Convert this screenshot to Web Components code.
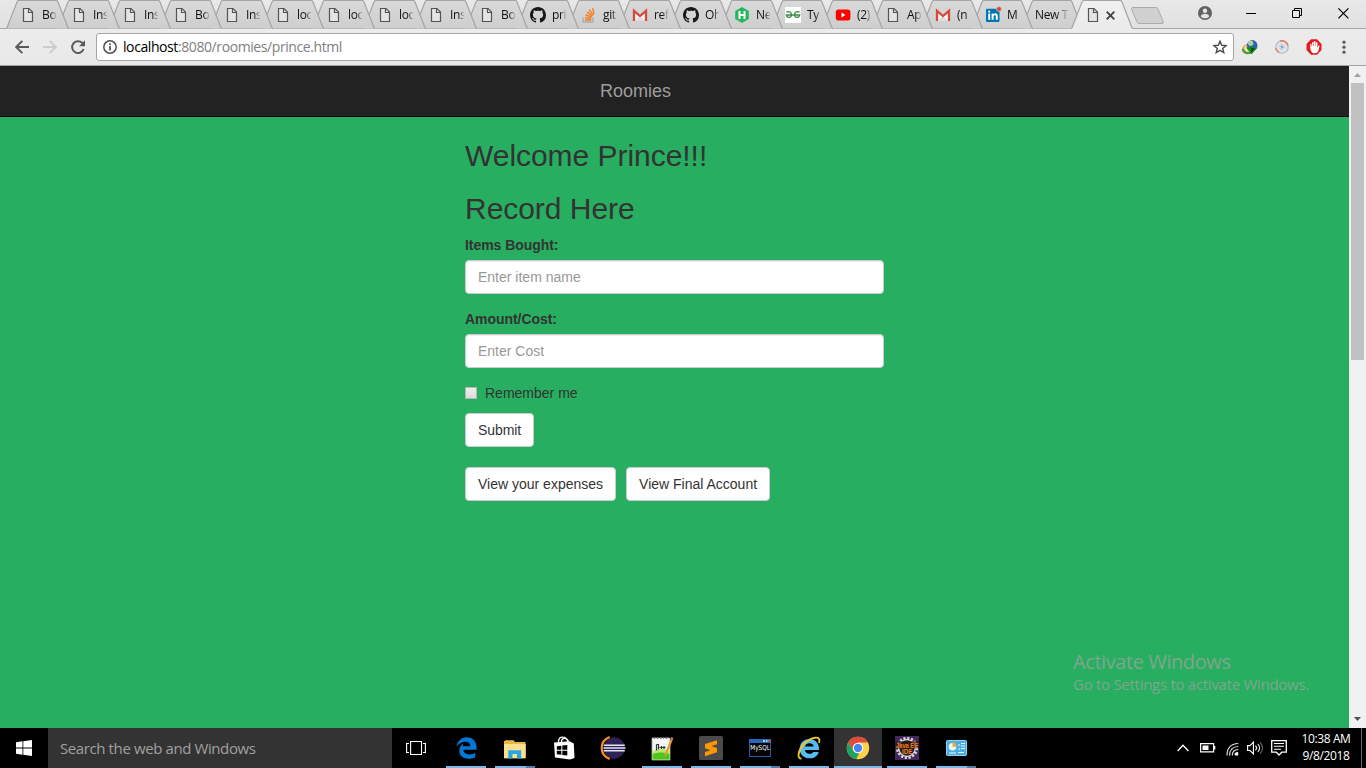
<!DOCTYPE html>
<html lang="en">
<head>
<meta charset="utf-8">
<title>Roomies</title>
<style>
html,body{margin:0;height:100%;overflow:hidden}
body{font-family:"Liberation Sans",Arial,sans-serif}
</style>
</head>
<body>
<desk-top></desk-top>
<script>
const UI = '"Open Sans","Noto Sans",sans-serif';

const ICONS = {
  page: [16,16,'<path d="M3.500 1.500h5.500l3.500 3.500v9.500h-9z" fill="#e4e4e4" stroke="#555" stroke-width="1.200"/><path d="M8.500 1.500v4h4" fill="none" stroke="#555" stroke-width="1.200"/>'],
  github: [16,16,'<path fill="#191717" d="M8 0C3.58 0 0 3.58 0 8c0 3.54 2.29 6.53 5.47 7.59.4.07.55-.17.55-.38v-1.49c-2.01.37-2.53-.49-2.69-.94-.09-.23-.48-.94-.82-1.13-.28-.15-.68-.52-.01-.53.63-.01 1.08.58 1.23.82.72 1.21 1.87.87 2.33.66.07-.52.28-.87.51-1.07-1.78-.2-3.64-.89-3.64-3.95 0-.87.31-1.59.82-2.15-.08-.2-.36-1.02.08-2.12 0 0 .67-.21 2.2.82.64-.18 1.32-.27 2-.27s1.36.09 2 .27c1.53-1.04 2.2-.82 2.2-.82.44 1.1.16 1.92.08 2.12.51.56.82 1.27.82 2.15 0 3.07-1.87 3.75-3.65 3.95.29.25.54.73.54 1.48v2.2c0 .21.15.46.55.38A8.01 8.01 0 0 0 16 8c0-4.42-3.58-8-8-8z"/>'],
  stack: [16,16,'<path d="M2 10.500V15h10v-4.500" fill="none" stroke="#aaa" stroke-width="1.300"/><g stroke="#f48024" stroke-width="1.400"><path d="M4 13h6.300M4 10.800l6.400.7M4.500 8l6.200 2M5.800 5.200l5.600 3.700M8.200 2.800l4.100 5.300M11.700 1.200l1.300 6"/></g>'],
  gmail: [16,16,'<path d="M2 3l6 5.500L14 3v11H2z" fill="#f7f7f7"/><path d="M2.500 14l5.500-5 5.500 5z" fill="#ddd"/><path d="M2 14V3.800L8 9l6-5.200V14" fill="none" stroke="#d54b3d" stroke-width="2.300"/>'],
  hacker: [16,16,'<path d="M8 0l6.800 4v8L8 16l-6.800-4V4z" fill="#25b75d"/><path d="M5.500 4v8M10.500 4v8M5.500 8h5" stroke="#fff" stroke-width="2" fill="none"/>'],
  geeks: [16,16,'<path d="M0 0h16v16H0z" fill="#fff"/><path d="M1.300 5.200c2.300-1.200 5.200-.3 5.200 2.500 0 3.300-4.700 3.600-5.200.300H14.700c-.5 3.300-5.200 3-5.200-.3 0-2.800 2.900-3.700 5.200-2.500" fill="none" stroke="#3b8a43" stroke-width="1.300"/>'],
  youtube: [16,16,'<rect x=".8" y="2.500" width="14.600" height="11" rx="2.800" fill="#f00"/><path d="M6.500 5.500v5l4-2.500z" fill="#fff"/>'],
  linkedin: [16,16,'<rect x="1" y="1.700" width="13.500" height="13.300" rx="1" fill="#0077b5"/><path d="M3.200 6.500h2v6.300h-2zM6.600 6.500h1.900v.9c.9-1.600 4.300-1.500 4.300 1.500v3.900h-2V9.500c0-1.900-2.200-1.700-2.200 0v3.300h-2z" fill="#fff"/><circle cx="4.200" cy="4.600" r="1.100" fill="#fff"/><circle cx="14" cy="2" r="2.500" fill="#e0433a" stroke="#d3d3d3" stroke-width=".7"/>'],
  tabclose: [9,9,'<path d="M.7.700l7.600 7.600M8.300.7L.7 8.300" stroke="#444" stroke-width="1.900"/>'],
  account: [14,14,'<circle cx="7" cy="7" r="7" fill="#626262"/><circle cx="7" cy="4.700" r="2.200" fill="#e4e4e4"/><path d="M2.700 10.300C3 6.900 11 6.900 11.300 10.300 9.500 13 4.500 13 2.700 10.300z" fill="#e4e4e4"/>'],
  min: [10,11,'<path d="M0 5.500h10" stroke="#000"/>'],
  restore: [10,11,'<path d="M.5 2.500h7v7h-7zM2.500 2.500v-2h7v7h-2" fill="none" stroke="#000"/>'],
  close: [11,11,'<path d="M.4.400l10 10M10.400.4L.4 10.400" stroke="#000" stroke-width="1.200"/>'],
  back: [14,14,'<path d="M14 7H1.500M7.300.9L1.200 7l6.100 6.100" fill="none" stroke="#5a5a5a" stroke-width="2"/>'],
  fwd: [14,14,'<path d="M0 7h12.500M6.700.9L12.800 7l-6.100 6.100" fill="none" stroke="#ccc" stroke-width="2"/>'],
  reload: [14,14,'<path d="M12.600 9A5.900 5.900 0 1 1 11.200 2.900L12.500 4.300" fill="none" stroke="#5a5a5a" stroke-width="2"/><path d="M14 .2V6.200H8z" fill="#5a5a5a"/>'],
  info: [14,14,'<circle cx="7" cy="7" r="6.200" fill="none" stroke="#505050" stroke-width="1.500"/><path d="M7 6v4.500M7 3.300v1.700" stroke="#505050" stroke-width="1.700"/>'],
  star: [14,14,'<path d="M7 1.300l1.700 4 4.300.3-3.300 2.800 1.100 4.200L7 10.300l-3.800 2.300 1.100-4.200L1 5.600l4.300-.3z" fill="none" stroke="#4c4c4c" stroke-width="1.400"/>'],
  idm: [16,16,'<ellipse cx="6" cy="9.700" rx="5.300" ry="3.800" transform="rotate(-25 6 9.700)" fill="none" stroke="#e2452d" stroke-width="1.500"/><ellipse cx="6.500" cy="9.500" rx="4.500" ry="3.300" fill="none" stroke="#f3d32c" stroke-width="1.500"/><path d="M1 10c1 5 6 5 9 3" fill="none" stroke="#31a83b" stroke-width="2"/><circle cx="10.200" cy="6.400" r="5.300" fill="#2d62b8"/><circle cx="8.700" cy="4.200" r="2.600" fill="#b5cf9a"/><path d="M4 8.500h5V7l6 2-5.500 6.200z" fill="#158a24"/><path d="M9 9h4l-3.500 5z" fill="#074f12"/>'],
  play: [14,14,'<circle cx="7" cy="7" r="6.200" fill="#e4e6ea" stroke="#b5b9c0" stroke-width="1.300"/><path d="M5 1A6.300 6.300 0 0 1 13 5.500M4 12.500A6.300 6.300 0 0 1 .8 8" fill="none" stroke="#ea7854" stroke-width="1.400"/><circle cx="7" cy="7" r="4" fill="#d5dee9"/><path d="M5.800 4.800v4.400L9.400 7z" fill="#8facce"/>'],
  adblock: [16,16,'<path d="M5 .2h6L15.500 5v6L11 15.800H5L.5 11V5z" fill="#e31b1f"/><path d="M4.300 8.500V5h1.300v2.500h.5V3h1.500v4h.4V2.300h1.500V7h.4V3.300h1.500v5h.4l.6-1.800h1.200L12.700 11c-.6 2.200-2 3.300-4 3.300C6 14.300 4.300 12 4.300 8.500z" fill="#fff"/>'],
  menu: [4,14,'<g fill="#5a5a5a"><circle cx="2" cy="2.200" r="1.600"/><circle cx="2" cy="7.200" r="1.600"/><circle cx="2" cy="12.200" r="1.600"/></g>'],
  win: [16,16,'<path fill="#fff" d="M0 2.200l6.500-.9v6.200H0zM7.300 1.200L16 0v7.500H7.300zM0 8.400h6.500v6.300L0 13.800zM7.300 8.400H16V16l-8.700-1.200z"/>'],
  taskview: [20,14,'<path d="M4.600.5h10.900v13H4.600zM3 2.500H.6v9H3M17 2.500h2.400v9H17" fill="none" stroke="#fff" stroke-width="1.100"/>'],
  edge: [21,22,'<path fill="#0078d7" d="M.5 9.800C1.300 4 5.300.2 10.800.2c6.200 0 9.700 4.500 9.700 10v2.600H7.200c.2 5 7.700 6 12 3v4.400c-5.800 3-15.900 2-15.900-6.400 0-4 2.200-6.300 4.500-7.400-.6.900-1 1.800-1.100 2.900h7.500c.3-6.500-9.700-5.500-13.700.5z"/>'],
  folder: [22,19,'<path d="M0 2V1h1V.300h8.500L11 2h10.500v16.200H0z" fill="#e9b843"/><path d="M0 4h21.700v14.200H0z" fill="#ffe08e"/><path d="M4.300 18.500v-8.200h12.900v8.200h-4.300v-4.600H8.500v4.600z" fill="#26a7e8"/>'],
  store: [22,24,'<path d="M5.500 7C5 2 8 .8 10 1.200c2 0 4.600 1.500 4.700 5M8.500 6.500C8 3 12.500-.5 15.600 5.500" fill="none" stroke="#fff" stroke-width="1.300"/><path d="M1 6.500l15.500-1.200 4.300 2.200.7 14.500-4.500 1.500L2 21.500z" fill="#fff"/><path d="M3.800 10.200l4.500-.5v4H3.800zM9.300 9.600l5-.5v4.600h-5zM3.800 14.700h4.500v4.100l-4.500-.5zM9.300 14.700h5v4.900l-5-.7z" fill="#000"/>'],
  eclipse: [24,24,'<path d="M8.800 1C-2 5-2 19 8.800 23" fill="none" stroke="#f7941e" stroke-width="2.200"/><circle cx="13.200" cy="12" r="10.700" fill="#2c2255"/><path d="M2.700 9.300h21M2.500 12h22M2.700 14.700h21" stroke="#e8e5f2" stroke-width="1.500"/>'],
  npp: [24,25,'<path d="M2 2h18v22H2z" fill="#f3f6f0" stroke="#aaa" stroke-width=".8"/><path d="M2.500 15.500c6-3 11-3 17-1v9h-17z" fill="#b9e86a"/><path d="M2.500 18c6-2 11-2 17 0v5.500h-17z" fill="#4fc41f"/><path d="M4.500 1v2M7.500 1v2M10.500 1v2M13.500 1v2M16.500 1v2" stroke="#777"/><path d="M6.500 8.500v6M6.500 8.500h2v5M9.500 11.500h6M11.500 10v3M14 10v3" stroke="#333" stroke-width="1.200" fill="none"/><path d="M14.500 18.500L20.500 3.500l2 1-6 14.500-2 1.500z" fill="#e89b2d"/><path d="M20.500 3.500l.8-2.500 2 1-.8 2.500z" fill="#d67a6a"/>'],
  sublime: [24,24,'<rect width="24" height="24" rx="1.500" fill="#4a4a4a"/><path d="M18 4.300v4L12.400 10l5.600 2v4.300L6 20.200v-4.100l5.600-1.800L6 12.300V8.100z" fill="#ff9800"/>'],
  mysql: [22,18,'<rect x=".5" y=".5" width="21" height="17" fill="#050505" stroke="#2a5fa8"/><path d="M0 0h22v4H0z" fill="#2866bd"/><path d="M14 1h2v2h-2zM17 1h1.500v2H17z" fill="#bcd2f3"/><path d="M19.300 1h2v2h-2z" fill="#e65342"/><text x="1.300" y="11.200" font-family="DejaVu Sans" font-size="6.800" textLength="19.500" lengthAdjust="spacingAndGlyphs" fill="#fff">MySQL</text>'],
  ie: [24,24,'<path d="M12.600 3C6.500 3 2.700 7.400 2.700 12.700c0 5.800 4.200 9.600 10 9.600 4.600 0 7.900-2.300 9-6.400h-5.400c-2 3.300-8.300 2-8.300-2h14C22.400 7.300 18.200 3 12.600 3z" fill="#57bdf0"/><path d="M8 10.500c.8-4.400 8-4.400 8.700 0z" fill="#000"/><path d="M22 7C25-1 14 .5 7 8 1 14.500-.5 23 4.500 22.500" fill="none" stroke="#f3c52b" stroke-width="1.900"/>'],
  chrome: [24,24,'<circle cx="12" cy="12" r="11.200" fill="#fcd04b"/><path d="M2.300 6.400A11.200 11.200 0 0 1 21.700 6.500H12L7.200 14.700z" fill="#e04a3f"/><path d="M2.300 6.400l5 8.400 4.700 2.600 1.200-.2-3 6A11.200 11.200 0 0 1 2.300 6.400z" fill="#1da462"/><circle cx="12" cy="12" r="5.300" fill="#fff"/><circle cx="12" cy="12" r="4.200" fill="#4a86f0"/>'],
  java: [24,24,'<path d="M0 0h24v24H0z" fill="#42285f"/><circle cx="12" cy="12" r="9.700" fill="none" stroke="#d8d8d8" stroke-width="2.800" stroke-dasharray="2.200 1.600"/><circle cx="12" cy="12" r="8.300" fill="#24201f" stroke="#ddd" stroke-width="1.300"/><path d="M0 5.300h24v7H0z" fill="#2c1710" opacity=".75"/><g fill="#f47b20" font-family="Liberation Sans" font-weight="bold"><text x="1" y="11.500" font-size="6.500" textLength="22" lengthAdjust="spacingAndGlyphs">Java EE</text><text x="7" y="18" font-size="7" textLength="10.500" lengthAdjust="spacingAndGlyphs">IDE</text></g>'],
  cpl: [21,16,'<rect x=".5" y=".5" width="20" height="15" rx=".8" fill="#4aaee0" stroke="#8cd4f3"/><circle cx="6.500" cy="6.800" r="3.800" fill="#e9f6fc"/><path d="M6.500 6.800V2.300a4.300 4.300 0 0 1 4.300 4.500z" fill="#f3aa2c"/><path d="M12 5h2M15 3.500h4M15 6h4M12 9h2M15 8.500h4M3 13h7M12 12.500h6" stroke="#e9f8ff" stroke-width="1.200"/>'],
  caret: [12,8,'<path d="M.6 7L6 1.300 11.400 7" fill="none" stroke="#fff" stroke-width="1.300"/>'],
  battery: [16,10,'<path d="M.6.600h13v8.300h-13z" fill="none" stroke="#fff" stroke-width="1.200"/><path d="M2.500 2.500h6v4.600h-6zM14 3h1.300v3.600H14z" fill="#fff"/>'],
  wifi: [13,14,'<g fill="none" stroke="#ddd" stroke-width="1.200"><path d="M1 13.500C1 6 5 1.800 12.300 1.500M3.600 13.500C3.600 8 7 4.600 12.300 4.500M6.300 13.500c0-3.500 2-5.900 6-6"/></g><path d="M8.500 12.500c0-1.800 1-2.500 3.700-2.600v3.700H9.300z" fill="#fff"/>'],
  volume: [17,14,'<path d="M.6 4.600h2.500l3.300-3.400v11.600L3.100 9.500H.6z" fill="none" stroke="#fff" stroke-width="1.100"/><path d="M8.500 4.700c1.300 1.400 1.300 3.200 0 4.600M10.800 3c2.300 2.600 2.300 5.500 0 8" fill="none" stroke="#eee" stroke-width="1.100"/><path d="M13.100 1.300c3.200 3.700 3.200 7.700 0 11.400" fill="none" stroke="#666" stroke-width="1.100"/>'],
  notify: [16,16,'<path d="M.7.700h14.600v11.500h-4.500L8 15l-2.700-2.800H.7z" fill="none" stroke="#fff" stroke-width="1.300"/><path d="M3 3.500h10M3 6.300h10M3 9.200h7" stroke="#fff" stroke-width="1.100"/>']
};

function define(name, html, setup) {
  const tpl = document.createElement('template');
  tpl.innerHTML = html;
  customElements.define(name, class extends HTMLElement {
    connectedCallback() {
      if (this.shadowRoot) return;
      const root = this.attachShadow({mode: 'open'});
      root.append(tpl.content.cloneNode(true));
      if (setup) setup(this, root);
    }
  });
}

define('ui-icon', '<style>:host{display:block;flex:none;line-height:0}svg{display:block;overflow:visible}</style>', (el, root) => {
  const [w, h, body] = ICONS[el.getAttribute('name')];
  const box = document.createElement('div');
  box.innerHTML = `<svg width="${w}" height="${h}" viewBox="0 0 ${w} ${h}">${body}</svg>`;
  root.append(box);
});

/* One line of text whose tracking is adjusted so that it takes the given width. */
define('fit-text', '<style>:host{display:inline-block;flex:none;white-space:nowrap}</style><slot></slot>', (el) => {
  const width = el.getBoundingClientRect().width;
  el.style.letterSpacing = (el.getAttribute('width') - width) / el.textContent.trim().length + 'px';
});

define('browser-tab', `<style>
:host{display:block;flex:none;position:relative;width:63px;height:29px;margin-right:-12px;font:12px/16px ${UI};letter-spacing:-.35px;color:#111}
:host([narrow]){width:62px}
svg{position:absolute;left:0;top:0;overflow:visible}
.row{position:relative;display:flex;height:29px;box-sizing:border-box;padding:7px 0 0 14px}
ui-icon{margin-right:6px}
.t{width:14px;overflow:hidden;white-space:nowrap;-webkit-mask:linear-gradient(90deg,#000 60%,rgba(0,0,0,.15));mask:linear-gradient(90deg,#000 60%,rgba(0,0,0,.15))}
:host([plain]) .t{width:33px}
.x{margin:4px 0 0 -1px}
</style><svg width="63" height="29"></svg><div class="row"></div>`, (el, root) => {
  const r = el.hasAttribute('narrow') ? 62 : 63, on = el.hasAttribute('active');
  const shape = `M0 28.500Q1 28 1.500 26.500L11 2Q11.500.5 13 .5H${r-13}Q${r-11.5} .5 ${r-11} 2L${r-1.500} 26.500Q${r-1} 28 ${r} 28.500`;
  root.querySelector('svg').innerHTML = `<defs><linearGradient id="g" x2="0" y2="1"><stop stop-color="${on?'#f0f0f0':'#d9d9d9'}"/><stop offset="1" stop-color="${on?'#ebebeb':'#cecece'}"/></linearGradient></defs><path d="${shape}${on?'V29H0':''}z" fill="url(#g)"/><path d="${shape}" fill="none" stroke="#a5a5a5" stroke-width="1.200"/>`;
  const row = root.querySelector('.row'), icon = el.getAttribute('icon');
  row.innerHTML = (icon ? `<ui-icon name="${icon}"></ui-icon>` : '') + (on ? '<ui-icon class="x" name="tabclose"></ui-icon>' : '<div class="t"><slot></slot></div>');
});

define('tab-strip', `<style>
:host{display:flex;height:29px;background:linear-gradient(#e8e8e8,#e1e1e1);box-shadow:inset 0 -1px #a5a5a5;padding-left:6px;box-sizing:border-box;isolation:isolate}
.tabs{display:flex;flex:none}
.rest{display:flex;flex:1}
.new{display:block;flex:none;margin:6px 0 0 9px}
.win{display:flex;margin-left:auto;padding:0 17px 0 0;align-items:flex-start}
.win ui-icon{margin-left:36px;margin-top:8px}
.win ui-icon:first-child{margin:6px -2px 0 0}
</style><div class="tabs"></div><div class="rest"><svg class="new" width="36" height="19"><path d="M3 1.500H26Q27.500 1.500 28 3L33.300 16Q33.500 17.500 32 17.500H9Q7.500 17.500 7 16L1.500 3Q1.200 1.500 3 1.500z" fill="#d0d0d0" stroke="#ababab"/></svg><div class="win"><ui-icon name="account"></ui-icon><ui-icon name="min"></ui-icon><ui-icon name="restore"></ui-icon><ui-icon name="close"></ui-icon></div></div>`, (el, root) => {
  const tabs = [['page','Bo'],['page','Ins'],['page','Ins'],['page','Bo'],['page','Ins'],['page','loc'],['page','loc'],['page','loc'],['page','Ins'],['page','Bo'],['github','pri'],['stack','git'],['gmail','ref'],['github','Oh'],['hacker','Ne'],['geeks','Ty'],['youtube','(2)'],['page','Ap'],['gmail','(n'],['linkedin','M'],['','New T'],['page','']];
  const last = tabs.length - 1;
  root.querySelector('.tabs').innerHTML = tabs.map(([i, t], n) => `<browser-tab style="z-index:${n === last ? 50 : 30 - n}" icon="${i}" ${n > 14 ? 'narrow' : ''} ${i ? '' : 'plain'} ${n === last ? 'active' : ''}>${t}</browser-tab>`).join('');
});

define('tool-bar', `<style>
:host{display:flex;align-items:center;height:37px;box-sizing:border-box;padding:0 20px 1px 15px;background:linear-gradient(#ececec,#e8e8e8);border-bottom:1px solid #a2a2a2}
.nav{display:flex;gap:14px;margin-right:11px}
.omni{width:1138px;height:28px;box-sizing:border-box;border:1px solid #a5a5a5;border-radius:3px;background:#fff;display:flex;align-items:center;padding:0 6px;font:14px/20px ${UI};color:#808080}
.omni ui-icon:last-child{margin-left:auto}
fit-text{margin-left:6px}
b{font-weight:400;color:#000}
.ext{display:flex;align-items:center;gap:17px;margin-left:8px}
.m{margin-left:3px}
</style>
<div class="nav"><ui-icon name="back"></ui-icon><ui-icon name="fwd"></ui-icon><ui-icon name="reload"></ui-icon></div>
<div class="omni"><ui-icon name="info"></ui-icon><fit-text width="219"><b>localhost</b>:8080/roomies/prince.html</fit-text><ui-icon name="star"></ui-icon></div>
<div class="ext"><ui-icon name="idm"></ui-icon><ui-icon name="play"></ui-icon><ui-icon name="adblock"></ui-icon><ui-icon class="m" name="menu"></ui-icon></div>`);

define('form-field', `<style>
:host{display:block;margin-bottom:15px}
label{display:block;font-weight:700;line-height:20px;margin-bottom:5px;letter-spacing:-.05px}
input{display:block;width:100%;height:34px;box-sizing:border-box;border:1px solid #ccc;border-radius:4px;padding:6px 12px;font:14px/20px "Liberation Sans",sans-serif;box-shadow:inset 0 1px 1px rgba(0,0,0,.075);background:#fff}
input::placeholder{color:#999;opacity:1}
</style><label><slot></slot></label><input type="text">`, (el, root) => {
  root.querySelector('input').placeholder = el.getAttribute('hint');
});

define('form-button', `<style>
:host{display:block;flex:none;box-sizing:border-box;height:34px;border:1px solid #ccc;border-radius:4px;background:#fff;padding:6px 12px;font-size:14px;line-height:20px;color:#333;white-space:nowrap;width:fit-content}
</style><slot></slot>`);

define('page-scroll', `<style>
:host{display:flex;flex-direction:column;align-items:center;width:17px;flex:none;background:#f1f1f1}
svg{display:block;flex:none}
.thumb{width:13px;height:277px;background:#c1c1c1}
.down{margin-top:auto}
</style><svg width="17" height="17"><path d="M5 11h7L8.500 7z" fill="#a3a3a3"/></svg><div class="thumb"></div><svg class="down" width="17" height="17"><path d="M5 6h7l-3.500 4z" fill="#505050"/></svg>`);

define('page-view', `<style>
:host{display:flex;height:662px;background:#27ae60;color:#333;font:14px/20px "Liberation Sans",sans-serif;position:relative}
main{flex:1}
nav{height:50px;background:#222;border-bottom:1px solid #080808;padding-left:600px;font-size:18px;line-height:50px;color:#9d9d9d}
section{width:419px;margin:22px 0 0 465px}
h2{font-size:30px;line-height:33px;font-weight:500;margin:0 0 20px;letter-spacing:-.04px}
h2+h2{margin-bottom:10px}
.check{display:flex;align-items:center;height:20px;margin-bottom:10px}
.check i{box-sizing:border-box;width:12px;height:12px;border:1px solid #b5b5b5;background:linear-gradient(#eee,#dcdcdc);margin-right:8px}
.submit{letter-spacing:-.08px}
.pair{display:flex;gap:10px;margin-top:20px}
.mark{position:absolute;left:1073px;top:582px;font-family:${UI};color:#7fa58c}
.mark fit-text{display:block;width:fit-content}
.a{font-size:20px;line-height:28px}.b{font-size:15px;line-height:16px}
</style>
<main><nav>Roomies</nav>
<section><h2>Welcome Prince!!!</h2><h2>Record Here</h2>
<form-field hint="Enter item name">Items Bought:</form-field>
<form-field hint="Enter Cost">Amount/Cost:</form-field>
<div class="check"><i></i>Remember me</div>
<form-button class="submit">Submit</form-button>
<div class="pair"><form-button>View your expenses</form-button><form-button>View Final Account</form-button></div>
</section></main>
<page-scroll></page-scroll>
<div class="mark"><fit-text class="a" width="157.500">Activate Windows</fit-text><fit-text class="b" width="236">Go to Settings to activate Windows.</fit-text></div>`);

define('task-button', `<style>
:host{display:flex;flex:none;position:relative;align-items:center;justify-content:center;width:48px;height:40px;margin-right:1px}
:host([current]){background:#333}
.bar{position:absolute;left:4px;right:4px;bottom:0;height:2px}
:host([open]) .bar{background:#76b9ed}
:host([many]) .bar{background:linear-gradient(90deg,#76b9ed 31px,#4e7fa8 31px)}
:host([current]) .bar{left:0;right:0}
</style><slot></slot><div class="bar"></div>`);

define('task-bar', `<style>
:host{display:flex;height:40px;background:#000;color:#fff;font-family:${UI}}
.search{width:332px;padding-left:12px;background:#333;color:#a0a0a0;font-size:15px;line-height:41px}
task-button:first-of-type{margin:0}
.tv{margin-right:2px}
.tray{display:flex;align-items:center;margin-left:auto}
.clock{display:flex;flex-direction:column;align-items:center;width:50px;font-size:12px;line-height:17px;margin:0 10px 2px 14px}
.end{width:4px;height:40px;border-left:1px solid #6a6a6a}
</style>
<task-button><ui-icon name="win"></ui-icon></task-button>
<div class="search"><fit-text width="195.500">Search the web and Windows</fit-text></div>
<task-button class="tv"><ui-icon name="taskview"></ui-icon></task-button>
<task-button open><ui-icon name="edge"></ui-icon></task-button>
<task-button many><ui-icon name="folder" style="margin-top:2px"></ui-icon></task-button>
<task-button><ui-icon name="store" style="margin-top:-1px"></ui-icon></task-button>
<task-button><ui-icon name="eclipse"></ui-icon></task-button>
<task-button open><ui-icon name="npp"></ui-icon></task-button>
<task-button open><ui-icon name="sublime"></ui-icon></task-button>
<task-button many><ui-icon name="mysql"></ui-icon></task-button>
<task-button open><ui-icon name="ie"></ui-icon></task-button>
<task-button open current><ui-icon name="chrome"></ui-icon></task-button>
<task-button open><ui-icon name="java"></ui-icon></task-button>
<task-button many><ui-icon name="cpl"></ui-icon></task-button>
<div class="tray"><ui-icon name="caret"></ui-icon><ui-icon name="battery" style="margin-left:11px"></ui-icon><ui-icon name="wifi" style="margin:2px 0 0 10px"></ui-icon><ui-icon name="volume" style="margin-left:8px"></ui-icon><ui-icon name="notify" style="margin-left:7px"></ui-icon>
<div class="clock"><fit-text width="49">10:38 AM</fit-text><fit-text width="47">9/8/2018</fit-text></div><div class="end"></div></div>`);

define('desk-top', `<style>:host{display:flex;flex-direction:column;width:1366px;height:768px;overflow:hidden}</style>
<tab-strip></tab-strip><tool-bar></tool-bar><page-view></page-view><task-bar></task-bar>`);
</script>
</body>
</html>
